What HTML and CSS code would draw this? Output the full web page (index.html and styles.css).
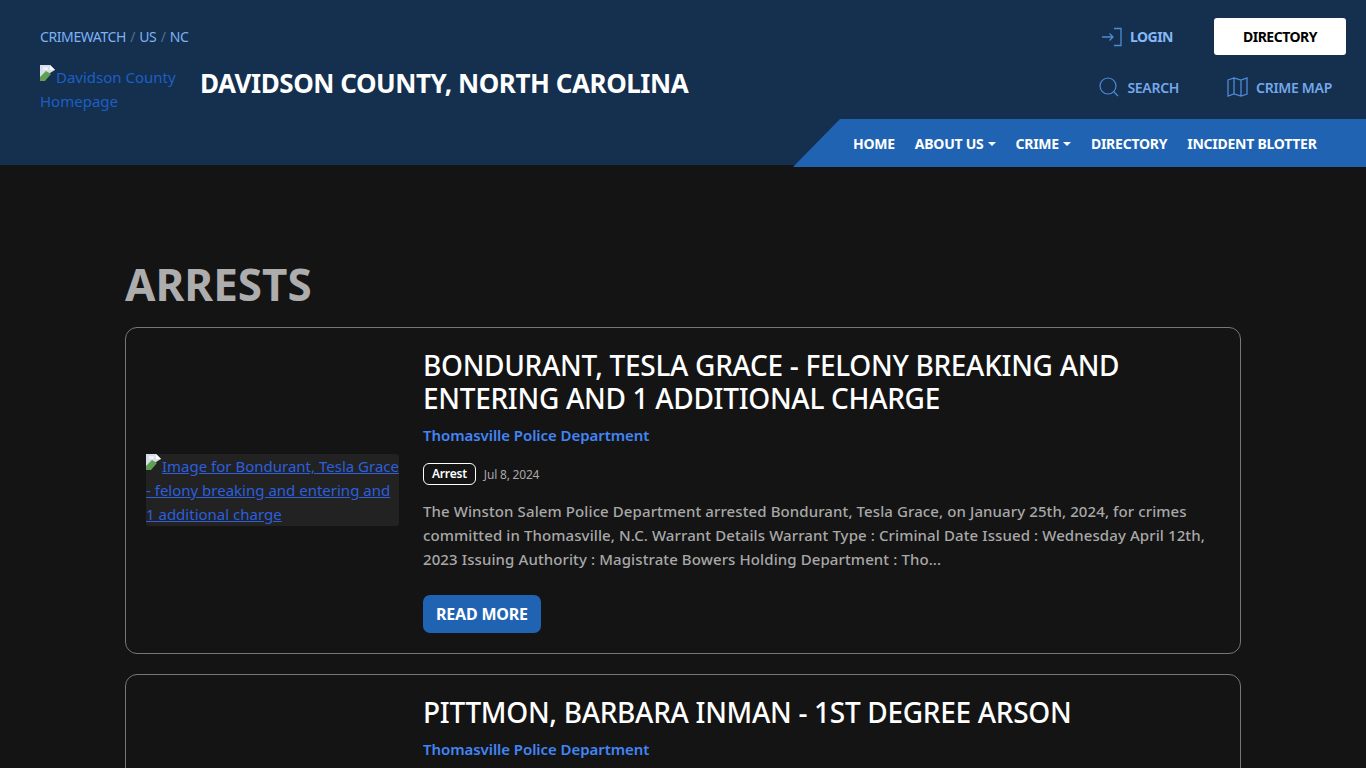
FILE: index.html
```html
<!DOCTYPE html>
<html lang="en">
<head>
    <meta charset="UTF-8">
    <meta name="viewport" content="width=device-width,initial-scale=1">
    <title>Arrests - Davidson County, North Carolina</title>
    <link rel="stylesheet" href="styles.css">
</head>
<body>
<header class="site-header">
    <div class="header-top">
        <div class="brand-col">
            <nav class="crumbs"><a href="#">CRIMEWATCH</a> <span>/</span> <a href="#">US</a> <span>/</span> <a href="#">NC</a></nav>
            <div class="brand">
                <a class="logo-alt" href="#"><svg class="broken" viewBox="0 0 16 16"><path d="M0 0h10l5 5-15 9z" fill="#d5dfec"/><path d="M10 0l5 5h-5z" fill="#fff"/><path d="M3 2h5v3H3z" fill="#eef2f7"/><path d="M0 16v-4l6-6 5 3-6 7z" fill="#5fa052"/></svg>Davidson County Homepage</a>
                <h1>DAVIDSON COUNTY, NORTH CAROLINA</h1>
            </div>
        </div>
        <div class="tools-col">
            <div class="tools-row">
                <a class="tool login" href="#">
                    <svg width="20" height="20" viewBox="0 0 20 20" fill="none" stroke="#4f8ad6" stroke-width="1.3"><path d="M0 10h11M7.500 6.500l3.500 3.500-3.500 3.500M12 1.500h7v17h-7"/></svg>
                    LOGIN
                </a>
                <a class="dir-btn" href="#">DIRECTORY</a>
            </div>
            <div class="tools-row second">
                <a class="tool wide" href="#">
                    <svg width="20" height="20" viewBox="0 0 20 20" fill="none" stroke="#4f8ad6" stroke-width="1.2"><circle cx="9" cy="9" r="8"/><path d="M14.500 14.500l4.500 4.500"/></svg>
                    SEARCH
                </a>
                <a class="tool wide" href="#">
                    <svg width="21" height="20" viewBox="0 0 21 20" fill="none" stroke="#4f8ad6" stroke-width="1.3"><path d="M1 3l6-2 7 2 6-2v16l-6 2-7-2-6 2zM7 1v16M14 3v16"/></svg>
                    CRIME MAP
                </a>
            </div>
        </div>
    </div>
    <nav class="main-nav">
        <a href="#">HOME</a>
        <a class="caret" href="#">ABOUT US</a>
        <a class="caret" href="#">CRIME</a>
        <a href="#">DIRECTORY</a>
        <a href="#">INCIDENT BLOTTER</a>
    </nav>
</header>

<main class="content">
    <h2 class="page-title">ARRESTS</h2>

    <article class="card">
        <div class="thumb">
            <a href="#"><svg class="broken" viewBox="0 0 16 16"><path d="M0 0h10l5 5-15 9z" fill="#d5dfec"/><path d="M10 0l5 5h-5z" fill="#fff"/><path d="M3 2h5v3H3z" fill="#eef2f7"/><path d="M0 16v-4l6-6 5 3-6 7z" fill="#5fa052"/></svg>Image for Bondurant, Tesla Grace - felony breaking and entering and 1 additional charge</a>
        </div>
        <div class="card-body">
            <h3>BONDURANT, TESLA GRACE - FELONY BREAKING AND ENTERING AND 1 ADDITIONAL CHARGE</h3>
            <a class="agency" href="#">Thomasville Police Department</a>
            <div class="meta"><span class="tag">Arrest</span><span class="date">Jul 8, 2024</span></div>
            <p>The Winston Salem Police Department arrested Bondurant, Tesla Grace, on January 25th, 2024, for crimes committed in Thomasville, N.C. Warrant Details Warrant Type : Criminal Date Issued : Wednesday April 12th, 2023 Issuing Authority : Magistrate Bowers Holding Department : Tho...</p>
            <a class="more" href="#">READ MORE</a>
        </div>
    </article>

    <article class="card">
        <div class="thumb"></div>
        <div class="card-body">
            <h3>PITTMON, BARBARA INMAN - 1ST DEGREE ARSON</h3>
            <a class="agency" href="#">Thomasville Police Department</a>
        </div>
    </article>
</main>
</body>
</html>
```

FILE: styles.css
```css
:root{
    --c-bg:#141414;
    --c-navy:#152f4f;
    --c-blue:#2163b3;
    --c-sky:#7db2f5;
    --c-link:#4285f4;
    --c-muted:#a8a8a8;
}
*{box-sizing:border-box;margin:0;padding:0}
html,body{height:768px;overflow:hidden}
body{background:var(--c-bg);color:#fff;font-family:"Noto Sans","Open Sans",sans-serif}
a{text-decoration:none}

.site-header{position:relative;height:165px;background:var(--c-navy);padding:18px 20px 0 40px}
.header-top{display:flex;justify-content:space-between}
.crumbs{font-size:14px;line-height:38px;color:#4d6f99;letter-spacing:-.4px}
.crumbs a{color:var(--c-sky)}
.crumbs span{margin:0 1px}
.brand{display:flex;align-items:flex-start;gap:24px;margin-top:-2px}
.logo-alt{width:136px;font-size:15px;line-height:24px;color:#1c5fc4;padding-top:11px}
.broken{width:16px;height:16px;vertical-align:2px}
.brand h1{font-size:26px;font-weight:700;line-height:34px;letter-spacing:-.45px;margin-top:12px;white-space:nowrap}

.tools-col{display:flex;flex-direction:column;align-items:flex-end}
.tools-row{display:flex;align-items:center;gap:41px}
.tools-row.second{gap:48px;margin:22px 14px 0 0}
.tool{display:flex;align-items:center;gap:8px;font-size:14px;font-weight:600;color:#74a8ea;letter-spacing:-.3px}
.tool.wide{gap:8px}
.login{color:#86b9f8;font-weight:700;letter-spacing:-.5px}
.dir-btn{display:block;width:132px;height:37px;line-height:37px;text-align:center;background:#fff;color:#000;font-size:14px;font-weight:700;border-radius:3px;letter-spacing:-.5px}

.main-nav{position:absolute;left:793px;right:0;top:119px;height:48px;background:var(--c-blue);clip-path:polygon(47px 0,100% 0,100% 100%,0 100%);display:flex;align-items:center;padding-left:60px;gap:20px}
.main-nav a{color:#fff;font-size:14px;font-weight:700;letter-spacing:-.25px}
.caret::after{content:"";display:inline-block;margin-left:4px;vertical-align:3px;border-top:4px solid #fff;border-left:4px solid transparent;border-right:4px solid transparent}

.content{width:1116px;margin:0 auto;padding-top:90px}
.page-title{font-size:44px;font-weight:700;line-height:58px;color:#adadad;margin-bottom:14px}

.card{display:flex;align-items:center;gap:24px;border:1px solid #777;border-radius:12px;padding:21px 20px 20px;margin-bottom:20px}
.thumb{flex:0 0 253px;background:#222;border-radius:3px;font-size:15px;line-height:24px;margin-bottom:2px}
.thumb a{color:#2c5fde;text-decoration:underline}
.card-body{flex:1}
.card-body h3{font-size:28px;font-weight:500;line-height:33px;letter-spacing:-.3px}
.agency{display:block;margin-top:8px;font-size:15px;font-weight:600;line-height:24px;color:var(--c-link);letter-spacing:-.06px}
.meta{display:flex;align-items:center;gap:8px;margin-top:16px}
.tag{font-size:12px;font-weight:600;line-height:20px;padding:0 8px;border:1px solid #fff;border-radius:6px;letter-spacing:-.2px}
.date{font-size:12px;color:var(--c-muted);letter-spacing:-.2px}
.card-body p{margin-top:14px;font-size:15px;font-weight:500;line-height:24px;color:var(--c-muted);letter-spacing:.1px}
.more{display:inline-block;margin-top:24px;height:38px;line-height:38px;padding:0 13px;background:var(--c-blue);border-radius:7px;color:#fff;font-size:16px;font-weight:700;letter-spacing:-.2px}
```
